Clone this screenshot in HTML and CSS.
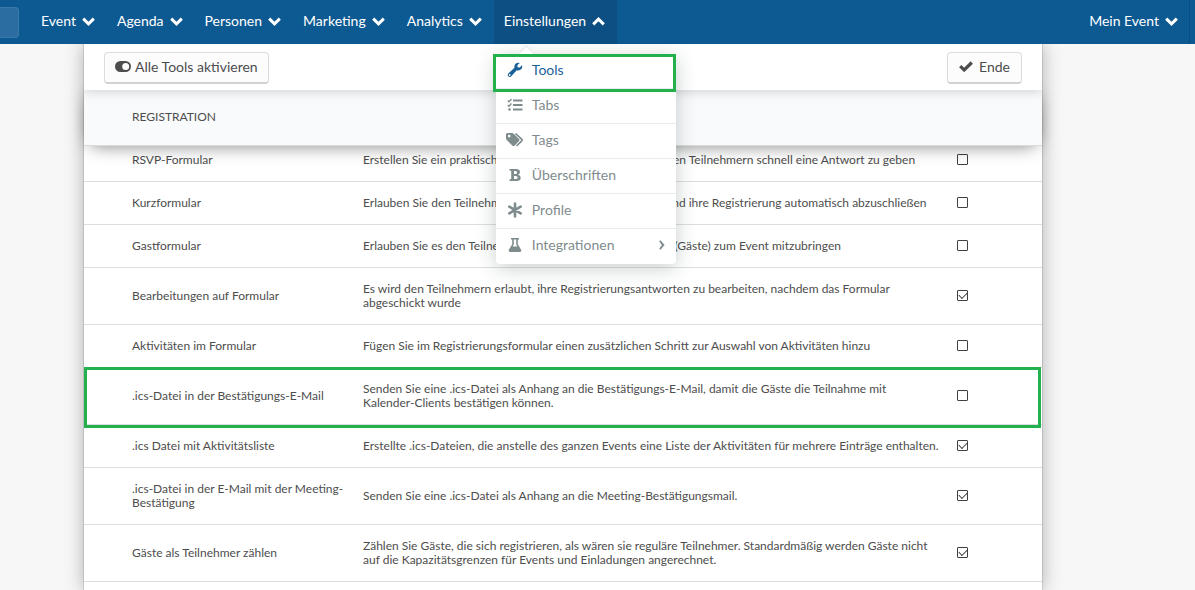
FILE: index.html
```html
<!DOCTYPE html>
<html lang="de">
<head>
<meta charset="utf-8">
<title>Tools</title>
<link rel="stylesheet" href="styles.css">
</head>
<body>
<svg class="defs" aria-hidden="true">
  <symbol id="down" viewBox="0 0 13 9"><path d="M1.200 1.700 6.500 6.800 11.800 1.700" fill="none" stroke="currentColor" stroke-width="3"/></symbol>
  <symbol id="up" viewBox="0 0 13 9"><path d="M1.200 7.300 6.500 2.200 11.800 7.300" fill="none" stroke="currentColor" stroke-width="3"/></symbol>
</svg>
<header class="topbar">
  <button class="search" aria-label="Suche"></button>
  <nav class="nav">
    <button class="nav-link">Event <svg class="chev"><use href="#down"/></svg></button>
    <button class="nav-link">Agenda <svg class="chev"><use href="#down"/></svg></button>
    <button class="nav-link">Personen <svg class="chev"><use href="#down"/></svg></button>
    <button class="nav-link">Marketing <svg class="chev"><use href="#down"/></svg></button>
    <button class="nav-link">Analytics <svg class="chev"><use href="#down"/></svg></button>
    <div class="nav-group">
      <button class="nav-link active" aria-expanded="true">Einstellungen <svg class="chev"><use href="#up"/></svg></button>
      <div class="menu">
        <a class="menu-item selected" href="#tools"><svg class="icon" viewBox="0 0 16 16"><path fill="currentColor" fill-rule="evenodd" d="M15 3.2 12.7 5.4 10.6 5.2 10.4 3.2 12.7 1C10.600 .4 8.500 1.300 7.700 3.100 7.300 4 7.300 4.900 7.500 5.800L1.300 11.600C.6 12.300.6 13.500 1.300 14.300 2.100 15.100 3.300 15.100 4 14.400L9.800 8.200C11.500 8.700 13.400 8.200 14.500 6.800 15.300 5.700 15.400 4.400 15 3.200ZM2.700 12.100a.9.9 0 1 1 0 1.800.9.9 0 0 1 0-1.800Z"/></svg>Tools</a>
        <a class="menu-item" href="#tabs"><svg class="icon" viewBox="0 0 16 16"><path fill="currentColor" d="M6 2.500h9.500v2H6zM6 7h9.500v2H6zM6 11.500h9.500v2H6z"/><path d="m.8 3.500 1.200 1.200L4.500 2M.8 8 2 9.200 4.500 6.500" fill="none" stroke="currentColor" stroke-width="1.300"/><circle cx="2.500" cy="12.500" r="1.300" fill="currentColor"/></svg>Tabs</a>
        <a class="menu-item" href="#tags"><svg class="icon wide" viewBox="0 0 18 16"><path fill="currentColor" fill-rule="evenodd" d="M0 2.500Q0 1 1.500 1H6Q7 1 8 2L13 7Q14 8 13 9L8.500 13.700Q7.500 14.500 6.500 13.700L1 8.200Q0 7.200 0 6.200ZM3.200 2.800a1.300 1.300 0 1 0 0 2.600 1.300 1.300 0 0 0 0-2.600Z"/><path d="M9.500 1.500 15.800 7.400Q16.500 8.100 15.800 8.800L10.500 14" fill="none" stroke="currentColor" stroke-width="1.700"/></svg>Tags</a>
        <a class="menu-item" href="#headings"><svg class="icon" viewBox="0 0 16 16"><path fill="currentColor" fill-rule="evenodd" d="M2.500 2H9Q13 2 13 5 13 7 11 7.700 13.700 8.300 13.700 10.700 13.700 14 9.300 14H2.500V12.500L4.200 12V4L2.500 3.500ZM7 4V7H8.400Q10.100 7 10.100 5.500 10.100 4 8.400 4ZM7 8.900V12H8.700Q10.700 12 10.700 10.400 10.700 8.900 8.700 8.900Z"/></svg>Überschriften</a>
        <a class="menu-item" href="#profile"><svg class="icon" viewBox="0 0 16 16"><path d="M8 1.500v13M2.300 4.700l11.400 6.600M2.300 11.300 13.700 4.700" fill="none" stroke="currentColor" stroke-width="2.600" stroke-linecap="round"/></svg>Profile</a>
        <a class="menu-item" href="#integrations"><svg class="icon" viewBox="0 0 16 16"><path fill="currentColor" fill-rule="evenodd" d="M4 1h8v1.500h-1.200v4.700l3.300 5.600Q14.800 15 12.800 15H3.200Q1.200 15 1.900 12.800L5.200 7.200V2.500H4ZM6.800 2.500V7.600L5.700 9.500h4.600L9.200 7.600V2.500Z"/></svg>Integrationen<svg class="more" viewBox="0 0 6 10"><path d="M1 .8Q2.200 3 4.300 5 2.200 7 1 9.200" fill="none" stroke="currentColor" stroke-width="1.800"/></svg></a>
      </div>
    </div>
  </nav>
  <button class="nav-link account">Mein Event <svg class="chev"><use href="#down"/></svg></button>
</header>
<main class="card">
  <div class="toolbar">
    <button class="btn"><svg class="toggle" viewBox="0 0 16 11"><path fill="currentColor" fill-rule="evenodd" d="M5.500 0h5a5.500 5.500 0 0 1 0 11h-5a5.500 5.500 0 0 1 0-11Zm5.200 2a3.500 3.500 0 1 0 0 7 3.500 3.500 0 0 0 0-7Z"/></svg>Alle Tools aktivieren</button>
    <button class="btn end"><svg class="tick" viewBox="0 0 14 11"><path d="M1.200 5.200 5.200 9 12.800 1.500" fill="none" stroke="currentColor" stroke-width="3.200"/></svg>Ende</button>
  </div>
  <h2 class="section">REGISTRATION</h2>
  <table class="tools">
    <tbody>
      <tr><td><label for="t1">RSVP-Formular</label></td><td>Erstellen Sie ein praktisches RSVP-Antwortformular, um Ihren Teilnehmern schnell eine Antwort zu geben</td><td><input type="checkbox" id="t1"></td></tr>
      <tr><td><label for="t2">Kurzformular</label></td><td>Erlauben Sie den Teilnehmern, sich ganz kurz einzutragen und ihre Registrierung automatisch abzuschließen</td><td><input type="checkbox" id="t2"></td></tr>
      <tr><td><label for="t3">Gastformular</label></td><td>Erlauben Sie es den Teilnehmern, mehrere Begleitpersonen (Gäste) zum Event mitzubringen</td><td><input type="checkbox" id="t3"></td></tr>
      <tr><td><label for="t4">Bearbeitungen auf Formular</label></td><td>Es wird den Teilnehmern erlaubt, ihre Registrierungsantworten zu bearbeiten, nachdem das Formular abgeschickt wurde</td><td><input type="checkbox" id="t4" checked></td></tr>
      <tr><td><label for="t5">Aktivitäten im Formular</label></td><td>Fügen Sie im Registrierungsformular einen zusätzlichen Schritt zur Auswahl von Aktivitäten hinzu</td><td><input type="checkbox" id="t5"></td></tr>
      <tr class="marked"><td><label for="t6">.ics-Datei in der Bestätigungs-E-Mail</label></td><td>Senden Sie eine .ics-Datei als Anhang an die Bestätigungs-E-Mail, damit die Gäste die Teilnahme mit <span class="keep">Kalender-Clients</span> bestätigen können.</td><td><input type="checkbox" id="t6"></td></tr>
      <tr><td><label for="t7">.ics Datei mit Aktivitätsliste</label></td><td>Erstellte .ics-Dateien, die anstelle des ganzen Events eine Liste der Aktivitäten für mehrere Einträge enthalten.</td><td><input type="checkbox" id="t7" checked></td></tr>
      <tr><td><label for="t8">.ics-Datei in der E-Mail mit der Meeting-Bestätigung</label></td><td>Senden Sie eine .ics-Datei als Anhang an die Meeting-Bestätigungsmail.</td><td><input type="checkbox" id="t8" checked></td></tr>
      <tr><td><label for="t9">Gäste als Teilnehmer zählen</label></td><td>Zählen Sie Gäste, die sich registrieren, als wären sie reguläre Teilnehmer. Standardmäßig werden Gäste nicht auf die Kapazitätsgrenzen für Events und Einladungen angerechnet.</td><td><input type="checkbox" id="t9" checked></td></tr>
    </tbody>
  </table>
</main>
</body>
</html>
```
FILE: styles.css
```css
* { box-sizing: border-box; }
html { height: 100%; overflow: hidden; }
body {
  margin: 0;
  min-height: 100%;
  display: flex;
  flex-direction: column;
  background: #f7f7f7;
  color: #4d4d4d;
  font: 12px/14px Lato, sans-serif;
}
button { font: inherit; color: inherit; border: 0; background: none; padding: 0; margin: 0; }
.defs { display: none; }

.topbar {
  position: relative;
  z-index: 3;
  display: flex;
  align-items: center;
  height: 44px;
  background: #0d5992;
  color: #fff;
}
.search {
  width: 19px;
  height: 31px;
  margin-right: 12px;
  background: #2c6da1;
  border: 1px solid #3b79aa;
  border-left: 0;
  border-radius: 0 4px 4px 0;
}
.nav { display: flex; }
.nav-group { position: relative; }
.nav-link {
  display: flex;
  align-items: center;
  gap: 6px;
  height: 44px;
  padding: 0 12px 2px 10px;
  font-size: 14px;
  line-height: 20px;
  white-space: nowrap;
}
.active { background: #0d4f82; }
.account { margin-left: auto; margin-right: 5px; padding-right: 11px; border-right: 1px solid #0b4d80; }
.chev { width: 13px; height: 9px; }

.menu {
  position: absolute;
  top: 54px;
  left: 2px;
  width: 180px;
  background: #fff;
  border-radius: 4px;
  box-shadow: 0 4px 20px rgba(30, 50, 50, .24);
  color: #7f8c8d;
}
.menu::before {
  content: "";
  position: absolute;
  top: -6px;
  left: 24px;
  width: 12px;
  height: 12px;
  background: #fff;
  border: 1px solid #e1e5e6;
  border-width: 1px 0 0 1px;
  transform: rotate(45deg);
}
.menu-item {
  display: flex;
  align-items: center;
  height: 35px;
  padding: 0 11px 2px;
  border-bottom: 1px solid #e8eaeb;
  color: inherit;
  font-size: 14px;
  line-height: 20px;
  text-decoration: none;
}
.menu-item:last-child { border-bottom-color: transparent; }
.selected { position: relative; color: #1b6199; }
.selected::after {
  content: "";
  position: absolute;
  inset: 0 0 -4px -3px;
  border: 3px solid #22b14c;
}
.icon { width: 16px; height: 16px; margin-right: 9px; }
.icon.wide { width: 18px; margin-left: -1px; margin-right: 8px; }
.more { width: 6px; height: 10px; margin-left: auto; }

.card {
  flex: 1;
  margin: 0 153px 0 84px;
  background: #fff;
  box-shadow: 0 0 1px rgba(0, 0, 0, .6), 0 0 18px rgba(0, 0, 0, .3);
}
.toolbar {
  position: relative;
  z-index: 2;
  display: flex;
  justify-content: space-between;
  align-items: center;
  padding: 8px 20px 6px;
  background: #fff;
  box-shadow: 0 2px 10px rgba(0, 20, 10, .16);
  clip-path: inset(0 0 -14px 0);
}
.btn {
  display: flex;
  align-items: center;
  gap: 4px;
  height: 32px;
  padding: 0 10px 2px;
  background: #fcfcfc;
  border: 1px solid #dcdcdc;
  border-bottom: 2px solid #d2d2d2;
  border-radius: 4px;
  font-size: 14px;
  line-height: 20px;
}
.end { gap: 6px; padding: 0 11px 2px; }
.toggle { width: 16px; height: 11px; }
.tick { width: 14px; height: 11px; }
.section {
  position: relative;
  z-index: 1;
  margin: 0;
  padding: 20px 48px 21px;
  background: #f9fafc;
  border-bottom: 1px solid #d9dbdd;
  box-shadow: 0 10px 18px -8px rgba(0, 0, 0, .24), 0 0 18px -6px rgba(0, 0, 0, .5);
  font-size: 12px;
  font-weight: 400;
}

.tools { width: 100%; border-collapse: separate; border-spacing: 0; table-layout: fixed; }
.tools td { padding: 14px 0; border-bottom: 1px solid #dedede; vertical-align: middle; }
.tools tr:first-child td { padding-top: 7px; }
.tools td:first-child { width: 279px; padding-left: 48px; padding-right: 16px; }
.tools td:nth-child(2) { padding-right: 14px; }
.tools td:last-child { width: 86px; }
.keep { white-space: nowrap; }
.marked { position: relative; }
.marked td:first-child::after {
  content: "";
  position: absolute;
  inset: -1px 1px -3px 0;
  border: 3px solid #22b14c;
}
input {
  appearance: none;
  display: grid;
  place-items: center;
  width: 11px;
  height: 11px;
  margin: 0 0 1px 1px;
  border: 1px solid #404040;
  border-radius: 1px;
  background: #fff;
}
input:checked::before {
  content: "";
  width: 7px;
  height: 4px;
  margin-bottom: 2px;
  border: solid #404040;
  border-width: 0 0 1px 1px;
  transform: rotate(-45deg);
}
```
